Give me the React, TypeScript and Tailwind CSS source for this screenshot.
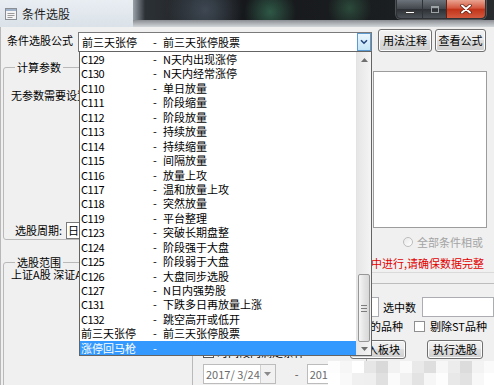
import React from "react";

// formula list shown in the open dropdown
const formulas: [string, string][] = [
  ["C129", "N天内出现涨停"],
  ["C130", "N天内经常涨停"],
  ["C110", "单日放量"],
  ["C111", "阶段缩量"],
  ["C112", "阶段放量"],
  ["C113", "持续放量"],
  ["C114", "持续缩量"],
  ["C115", "间隔放量"],
  ["C116", "放量上攻"],
  ["C117", "温和放量上攻"],
  ["C118", "突然放量"],
  ["C119", "平台整理"],
  ["C123", "突破长期盘整"],
  ["C124", "阶段强于大盘"],
  ["C125", "阶段弱于大盘"],
  ["C126", "大盘同步选股"],
  ["C127", "N日内强势股"],
  ["C131", "下跌多日再放量上涨"],
  ["C132", "跳空高开或低开"],
  ["前三天张停", "前三天张停股票"],
  ["涨停回马枪", ""],
];

const mosaicRows = [
  ["bg-[#fdfdfd]", "bg-[#f6f6f6]", "bg-[#ffffff]", "bg-[#e6e6e6]", "bg-[#d9d9d9]", "bg-[#f2f2f2]", "bg-[#fafafa]", "bg-[#e9e9e9]", "bg-[#dedede]", "bg-[#f7f7f7]", "bg-[#ececec]", "bg-[#dcdcdc]", "bg-[#f3f3f3]", "bg-[#fafafa]"],
  ["bg-[#ffffff]", "bg-[#f9f9f9]", "bg-[#f0f0f0]", "bg-[#efefef]", "bg-[#e0e0e0]", "bg-[#fbfbfb]", "bg-[#f1f1f1]", "bg-[#e3e3e3]", "bg-[#f6f6f6]", "bg-[#fdfdfd]", "bg-[#e8e8e8]", "bg-[#e2e2e2]", "bg-[#f8f8f8]", "bg-[#ffffff]"],
];

const btn =
  "h-[19px] border border-[#707070] rounded-[3px] bg-[linear-gradient(180deg,#f2f2f2_0%,#ebebeb_45%,#dddddd_50%,#cfcfcf_100%)] shadow-[inset_0_0_0_1px_#fbfbfb] leading-[17px] text-center whitespace-nowrap";

function TitleBar() {
  return (
    <div className="flex h-[27px]">
      <div className="w-[133px] flex items-center pl-[5px] bg-[linear-gradient(180deg,#e9eef3,#dae1e8)]">
        <svg width="12" height="12" viewBox="0 0 12 12">
          <rect x="0.5" y="0.5" width="11" height="11" fill="#f4f4f4" stroke="#8a8f96" />
          <rect x="1" y="1" width="10" height="2" fill="#9fb2c8" />
          <path d="M2.5 5.5h7M2.5 7.5h7M2.5 9.5h5" stroke="#9a9a9a" />
        </svg>
        <span className="ml-[5px] text-[12px] leading-[14px] text-[#1e1e1e]">条件选股</span>
      </div>
      <div className="flex-1 flex flex-col">
        <div className="h-[20px] flex justify-end pr-[8px] bg-[radial-gradient(circle_at_20%_50%,#3e4853_0,transparent_38px),radial-gradient(circle_at_38%_60%,#2e5846_0,transparent_26px),radial-gradient(circle_at_60%_40%,#2b4a3b_0,transparent_22px),linear-gradient(90deg,#9aa2aa_0,#2c3136_12px,#16181b_30%,#1b1e20_70%,#272b2e_100%)]">
          <div className="flex h-[19px] rounded-b-[5px] overflow-hidden border border-t-0 border-[#2f3338] shadow-[0_0_0_1px_rgba(255,255,255,0.22)]">
            <div className="w-[25px] flex items-end justify-center pb-[4px] bg-[linear-gradient(180deg,#6d737a,#41464c_50%,#2d3135_51%,#4b5157)]">
              <div className="w-[10px] h-[3px] bg-white border border-[#3a3a3a]" />
            </div>
            <div className="w-[24px] flex items-center justify-center border-l border-[#2f3338] bg-[linear-gradient(180deg,#6d737a,#41464c_50%,#2d3135_51%,#4b5157)]">
              <div className="w-[8px] h-[7px] border border-[#9ea3a8] border-t-2" />
            </div>
            <div className="w-[39px] flex items-center justify-center border-l border-[#5a2418] bg-[linear-gradient(180deg,#e9a491,#d4573f_45%,#c13419_52%,#d35a3f)]">
              <svg width="12" height="10" viewBox="0 0 12 10">
                <path d="M2 1.5l8 7M10 1.5l-8 7" stroke="#5c1a0e" strokeWidth="3.4" strokeLinecap="round" />
                <path d="M2 1.5l8 7M10 1.5l-8 7" stroke="#ffffff" strokeWidth="2" strokeLinecap="round" />
              </svg>
            </div>
          </div>
        </div>
        <div className="flex-1 bg-[linear-gradient(180deg,#8a8e92,#d3d6d9)]" />
      </div>
    </div>
  );
}

function Header() {
  return (
    <div className="flex items-start h-[25px] shrink-0">
      <div className="ml-[6px] mt-[6px] w-[71px] leading-[14px] whitespace-nowrap">条件选股公式</div>
      <div className="mt-[5px] w-[294px] h-[20px] flex border border-[#7a7a7a] bg-white">
        <div className="flex-1 flex items-center pl-[3px] leading-[18px] whitespace-nowrap">
          <span className="w-[71px]">前三天张停</span>
          <span className="w-[10px]">-</span>
          <span>前三天张停股票</span>
        </div>
        <div className="w-[14px] flex items-center justify-center border border-[#5c9bd1] bg-[linear-gradient(180deg,#eaf6fd,#c4e5f6)]">
          <svg width="8" height="6" viewBox="0 0 8 6">
            <path d="M1 1.2l3 3 3-3" fill="none" stroke="#22457e" strokeWidth="1.6" />
          </svg>
        </div>
      </div>
      <div className={`${btn} ml-[6px] mt-[2px] w-[54px] h-[23px] leading-[21px]`}>用法注释</div>
      <div className={`${btn} ml-[3px] mt-[2px] w-[51px] h-[23px] leading-[21px]`}>查看公式</div>
    </div>
  );
}

function LeftColumn() {
  return (
    <div className="w-[371px] shrink-0 flex flex-col">
      <fieldset className="ml-[2px] mt-[8px] w-[363px] h-[186px] border border-[#b9b9b9] rounded-[3px]">
        <legend className="ml-[11px] px-[2px] leading-[14px]">计算参数</legend>
        <div className="ml-[7px] mt-[14px] leading-[14px] whitespace-nowrap">无参数需要设置</div>
        <div className="ml-[11px] mt-[120px] h-[17px] flex items-center">
          <span className="w-[51px] whitespace-nowrap">选股周期:</span>
          <div className="w-[90px] h-[17px] pl-[1px] border border-[#7a7a7a] bg-white leading-[15px]">日线</div>
        </div>
      </fieldset>
      <fieldset className="ml-[2px] mt-[15px] w-[363px] h-[140px] border border-[#b9b9b9] rounded-[3px]">
        <legend className="ml-[11px] px-[2px] leading-[14px]">选股范围</legend>
        <div className="ml-[7px] -mt-[2px] leading-[14px] whitespace-nowrap">上证A股 深证A股 中小板 创业板</div>
        <div className="ml-[188px] mt-[62px] w-[174px] h-[60px] border-l border-t border-[#b9b9b9]">
          <div className="ml-[10px] mt-[1px] h-[14px] flex items-center">
            <div className="w-[11px] h-[11px] border border-[#555] bg-white flex items-center justify-center">
              <svg width="7" height="6" viewBox="0 0 7 6">
                <path d="M0.8 3l2 2 3.5-4.3" fill="none" stroke="#222" strokeWidth="1.5" />
              </svg>
            </div>
            <span className="ml-[3px] leading-[14px] whitespace-nowrap">时间段内满足条件</span>
          </div>
          <div className="ml-[10px] mt-[5px] flex items-center">
            <div className="w-[85px] h-[20px] flex border border-[#bcbcbc] bg-white">
              <span className="flex-1 pl-[2px] leading-[18px] text-[#6b6b6b] whitespace-pre">2017/ 3/24</span>
              <div className="w-[15px] flex items-center justify-center border-l border-[#d0d0d0] bg-[#f1f1f1]">
                <svg width="7" height="4" viewBox="0 0 7 4"><path d="M0 0h7L3.5 4z" fill="#8a8a8a" /></svg>
              </div>
            </div>
            <span className="ml-[19px] text-[#555]">-</span>
            <div className="ml-[8px] w-[70px] h-[20px] border border-[#bcbcbc] bg-white pl-[2px] leading-[18px] text-[#6b6b6b] whitespace-pre">2017/ 3/24</div>
          </div>
        </div>
      </fieldset>
    </div>
  );
}

function RightColumn() {
  return (
    <div className="flex-1 min-w-0 flex flex-col">
      <div className="mt-[19px] ml-[1px] w-[114px] h-[157px] border border-[#9c9c9c] bg-white" />
      <div className="mt-[7px] h-[14px] flex items-center">
        <span className="ml-[31px] w-[10px] h-[10px] rounded-full border border-[#bdbdbd] bg-[linear-gradient(135deg,#e8e8e8,#ffffff)]" />
        <span className="ml-[4px] leading-[14px] text-[#a3a3a3] whitespace-nowrap">全部条件相或</span>
      </div>
      <div className="mt-[7px] h-[14px] flex justify-end pr-[10px]">
        <span className="shrink-0 leading-[14px] text-[#e00000] whitespace-nowrap">选股在本地数据中进行,请确保数据完整</span>
      </div>
      <div className="mt-[2px] border-t border-[#dadada]" />
      <div className="mt-[10px] border-t border-[#bdbdbd]" />
      <div className="mt-[13px] h-[20px] flex items-center">
        <div className="w-[7px] h-full border-y border-r border-[#abadb3] bg-white" />
        <span className="ml-[4px] leading-[14px] whitespace-nowrap">选中数</span>
        <div className="ml-[6px] flex-1 h-full border border-[#abadb3] bg-white" />
      </div>
      <div className="mt-[2px] h-[14px] flex items-center">
        <span className="-ml-[2px] leading-[14px] whitespace-nowrap">的品种</span>
        <span className="ml-[11px] w-[11px] h-[11px] border border-[#8f8f8f] bg-white" />
        <span className="ml-[5px] leading-[14px] whitespace-nowrap">剔除ST品种</span>
      </div>
      <div className="mt-[7px] flex">
        <div className={`${btn} shrink-0 -ml-[22px] w-[56px]`}>导入板块</div>
        <div className={`${btn} shrink-0 ml-[21px] w-[56px]`}>执行选股</div>
      </div>
    </div>
  );
}

function Scrollbar() {
  return (
    <div className="w-[15px] flex flex-col border-l border-[#e3e3e3] bg-[linear-gradient(90deg,#e6e6e6,#f4f4f4)]">
      <div className="h-[15px] flex items-center justify-center">
        <svg width="7" height="4" viewBox="0 0 7 4"><path d="M0 4L3.5 0 7 4z" fill="#6f6f6f" /></svg>
      </div>
      <div className="flex-1 flex flex-col justify-end px-[1px]">
        <div className="h-[68px] flex flex-col items-center justify-center gap-[2px] rounded-[2px] border border-[#979797] bg-[linear-gradient(90deg,#f6f6f6,#e4e4e4_50%,#d8d8d8)]">
          <div className="w-[6px] h-[1px] bg-[#7c7c7c]" />
          <div className="w-[6px] h-[1px] bg-[#7c7c7c]" />
          <div className="w-[6px] h-[1px] bg-[#7c7c7c]" />
        </div>
      </div>
      <div className="h-[13px] flex items-center justify-center">
        <svg width="7" height="4" viewBox="0 0 7 4"><path d="M0 0h7L3.5 4z" fill="#6f6f6f" /></svg>
      </div>
    </div>
  );
}

function DropList() {
  return (
    <div className="absolute left-[79px] top-[51px] w-[293px] flex border border-[#646464] bg-white">
      <div className="flex-1">
        {formulas.map(([code, name], i) => {
          const selected = i === formulas.length - 1;
          const ascii = code.startsWith("C");
          return (
            <div
              key={code}
              className={
                selected
                  ? "h-[14.45px] flex pl-[1px] leading-[14.45px] whitespace-nowrap bg-[#3399ff] text-white"
                  : "h-[14.45px] flex pl-[1px] leading-[14.45px] whitespace-nowrap"
              }
            >
              <span className={ascii ? "w-[72px] tracking-[-0.6px]" : "w-[72px]"}>{code}</span>
              <span className="w-[10px]">-</span>
              <span>{name}</span>
            </div>
          );
        })}
      </div>
      <Scrollbar />
    </div>
  );
}

function Mosaic() {
  return (
    <div className="absolute left-[328px] top-[361px] flex flex-col">
      {mosaicRows.map((row, r) => (
        <div key={r} className="flex">
          {row.map((c, i) => (
            <div key={i} className={`w-[12px] h-[12px] ${c}`} />
          ))}
        </div>
      ))}
    </div>
  );
}

export default function App() {
  return (
    <div className="relative w-[494px] h-[385px] overflow-hidden bg-[#f0f0f0] text-[11px] text-black font-['Noto_Sans_CJK_SC','Noto_Sans',sans-serif]">
      <TitleBar />
      <div className="flex flex-col h-[358px] border-l border-[#b8b8b8]">
        <Header />
        <div className="flex flex-1 min-h-0">
          <LeftColumn />
          <RightColumn />
        </div>
      </div>
      <DropList />
      <Mosaic />
    </div>
  );
}
